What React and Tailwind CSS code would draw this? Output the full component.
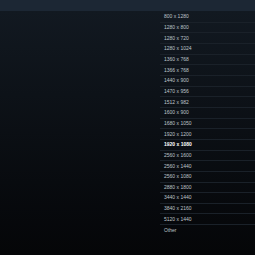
import React from "react";

const resolutions = [
  "800 x 1280",
  "1280 x 800",
  "1280 x 720",
  "1280 x 1024",
  "1360 x 768",
  "1366 x 768",
  "1440 x 900",
  "1470 x 956",
  "1512 x 982",
  "1600 x 900",
  "1680 x 1050",
  "1920 x 1200",
  "1920 x 1080",
  "2560 x 1600",
  "2560 x 1440",
  "2560 x 1080",
  "2880 x 1800",
  "3440 x 1440",
  "3840 x 2160",
  "5120 x 1440",
  "Other",
];

function App() {
  const selected = "1920 x 1080";

  return (
    <div className="w-full h-[255px] flex flex-col overflow-hidden font-['Liberation_Sans',Arial,sans-serif]">
      <div className="h-[11px] shrink-0 bg-[#1c2734]" />
      <div className="flex-1 bg-gradient-to-b from-[#121921] to-[#050608] pt-[1px]">
        <ul className="ml-[160px]">
          {resolutions.map((res, i) => (
            <li
              key={res}
              className={
                "h-[10.667px] flex items-center pl-[4px] text-[5px] leading-none " +
                (i < resolutions.length - 1 ? "border-b border-[#1a2129] " : "") +
                (res === selected ? "text-white font-bold" : "text-[#bfc4ca]")
              }
            >
              {res}
            </li>
          ))}
        </ul>
      </div>
    </div>
  );
}

export default App;
